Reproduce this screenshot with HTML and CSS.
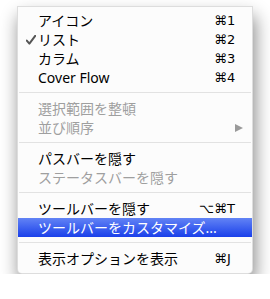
FILE: index.html
```html
<!DOCTYPE html>
<html lang="ja">
<head>
  <meta charset="UTF-8">
  <title>表示メニュー</title>
  <link rel="stylesheet" href="styles.css">
</head>
<body>

  <div class="menu">
    <div class="item">
      <span class="mark"></span>
      <span class="label">アイコン</span>
      <span class="shortcut"><span class="mods">⌘</span><span class="key">1</span></span>
    </div>
    <div class="item">
      <span class="mark">
        <svg width="10" height="10" viewBox="0 0 10 10"><path d="M0.8 5.6 L3.4 8.6 L9.2 0.8" fill="none" stroke="#555" stroke-width="2" stroke-linecap="round" stroke-linejoin="round"/></svg>
      </span>
      <span class="label">リスト</span>
      <span class="shortcut"><span class="mods">⌘</span><span class="key">2</span></span>
    </div>
    <div class="item">
      <span class="mark"></span>
      <span class="label">カラム</span>
      <span class="shortcut"><span class="mods">⌘</span><span class="key">3</span></span>
    </div>
    <div class="item">
      <span class="mark"></span>
      <span class="label">Cover Flow</span>
      <span class="shortcut"><span class="mods">⌘</span><span class="key">4</span></span>
    </div>

    <div class="separator"></div>

    <div class="item disabled">
      <span class="mark"></span>
      <span class="label">選択範囲を整頓</span>
    </div>
    <div class="item disabled">
      <span class="mark"></span>
      <span class="label">並び順序</span>
      <span class="submenu"></span>
    </div>

    <div class="separator"></div>

    <div class="item">
      <span class="mark"></span>
      <span class="label">パスバーを隠す</span>
    </div>
    <div class="item disabled">
      <span class="mark"></span>
      <span class="label">ステータスバーを隠す</span>
    </div>

    <div class="separator"></div>

    <div class="item">
      <span class="mark"></span>
      <span class="label">ツールバーを隠す</span>
      <span class="shortcut"><span class="mods">⌥⌘</span><span class="key">T</span></span>
    </div>
    <div class="item selected">
      <span class="mark"></span>
      <span class="label">ツールバーをカスタマイズ...</span>
    </div>

    <div class="separator"></div>

    <div class="item">
      <span class="mark"></span>
      <span class="label">表示オプションを表示</span>
      <span class="shortcut"><span class="mods">⌘</span><span class="key">J</span></span>
    </div>
  </div>

</body>
</html>
```

FILE: styles.css
```css
body {
  margin: 0;
  padding: 0;
  background-color: #ffffff;
  font-family: 'Noto Sans', 'Noto Sans CJK JP', sans-serif;
  font-size: 14px;
  color: #000;
}

/* メニュー本体 */
.menu {
  width: 234px;
  margin: 6px 0 0 17px;
  padding: 4px 0 5px;
  background-color: #fcfcfc;
  border: 1px solid rgba(0, 0, 0, 0.12);
  border-radius: 0 0 5px 5px;
  box-shadow: 2px 10px 18px rgba(0, 0, 0, 0.48);
}

.item {
  display: flex;
  align-items: center;
  height: 19px;
  line-height: 19px;
  padding-right: 16px;
}

.mark {
  width: 20px;
  display: flex;
  justify-content: flex-end;
}

.mark svg {
  margin-right: 2px;
}

.label {
  flex: 1;
  white-space: nowrap;
}

.shortcut {
  display: flex;
  font-family: 'DejaVu Sans', sans-serif;
  font-size: 13px;
}

.mods {
  text-align: right;
}

.key {
  width: 9px;
  text-align: left;
}

.disabled {
  color: #9f9f9f;
}

/* サブメニューの三角 */
.submenu {
  width: 0;
  height: 0;
  border-top: 4.5px solid transparent;
  border-bottom: 4.5px solid transparent;
  border-left: 8px solid #9a9a9a;
  margin-right: -7px;
}

.selected {
  background: linear-gradient(#6283f5, #1a40ea);
  color: #fff;
}

.separator {
  height: 1px;
  margin: 5px 1px 6px;
  background-color: #e2e2e2;
}
```
